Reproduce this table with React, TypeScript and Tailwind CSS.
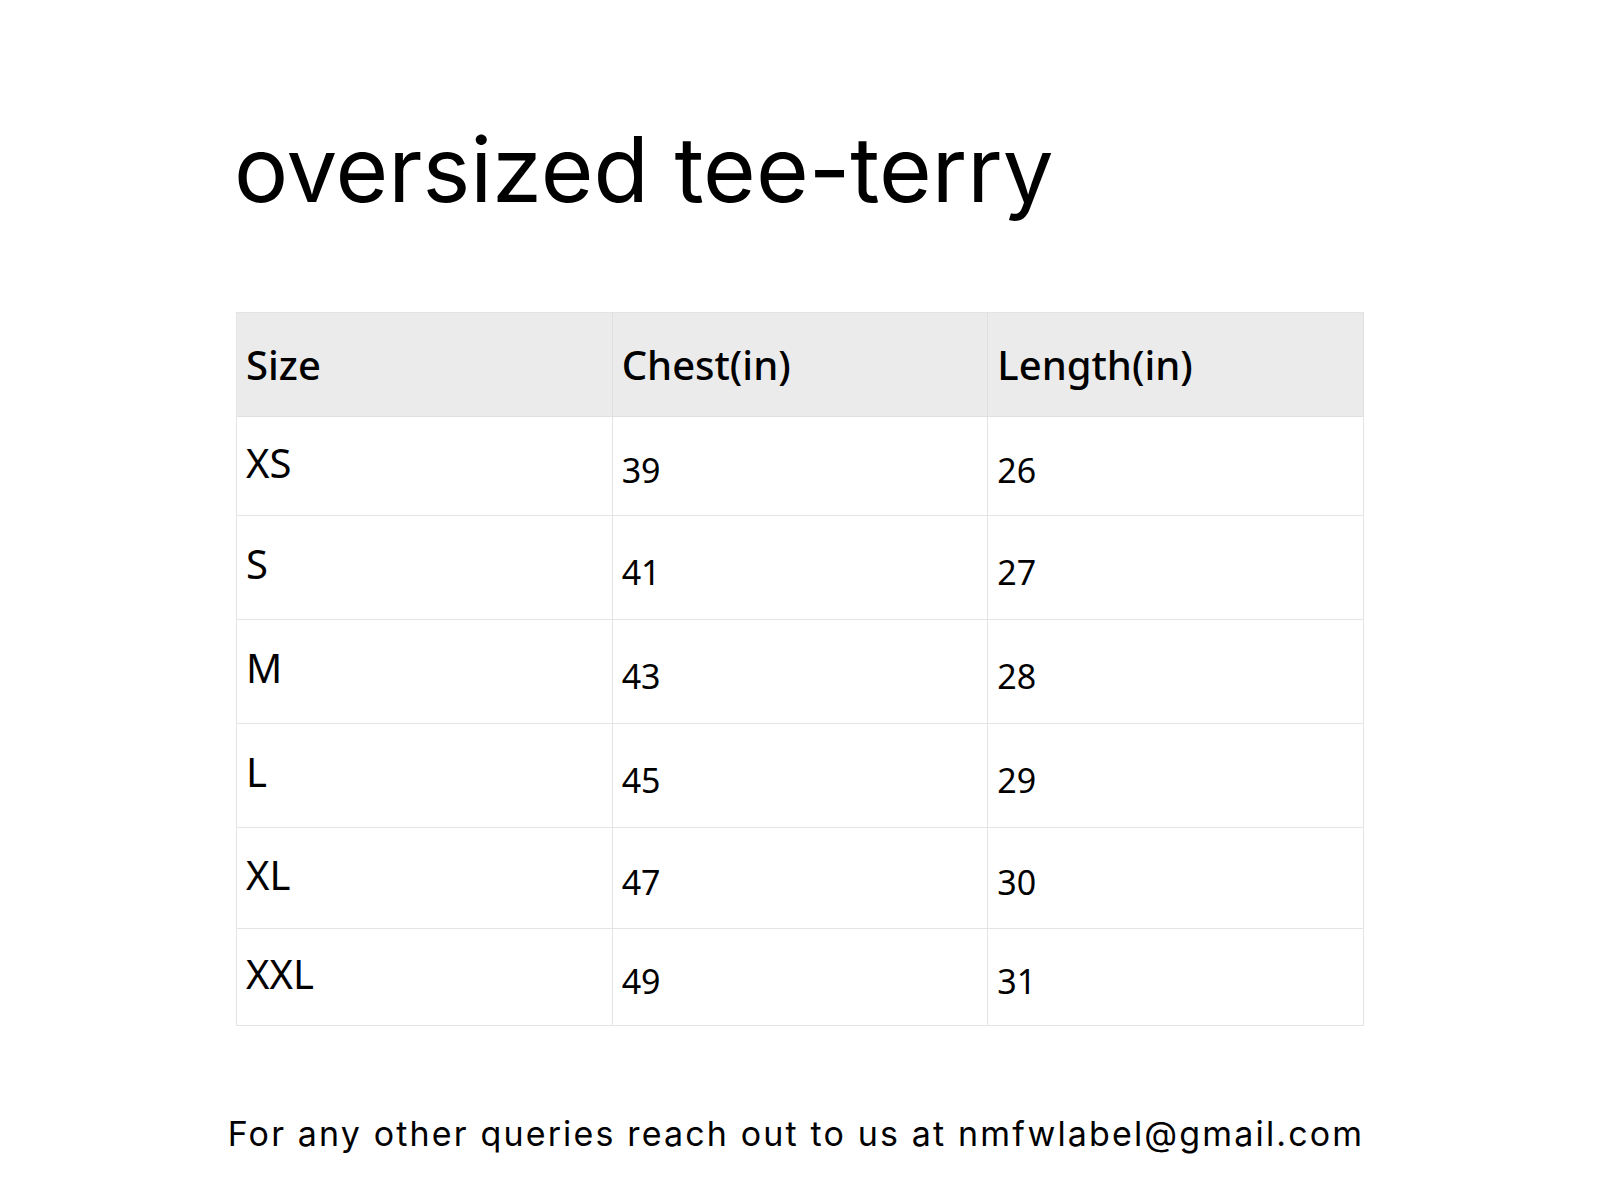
const rows = [
  { size: 'XS', chest: '39', length: '26', h: 'h-[99px]' },
  { size: 'S', chest: '41', length: '27', h: 'h-[104px]' },
  { size: 'M', chest: '43', length: '28', h: 'h-[104px]' },
  { size: 'L', chest: '45', length: '29', h: 'h-[104px]' },
  { size: 'XL', chest: '47', length: '30', h: 'h-[101px]' },
  { size: 'XXL', chest: '49', length: '31', h: 'h-[97px]' },
];

/** 尺码表页面 */
export default function App() {
  return (
    <div className="min-h-screen w-full bg-white text-black">
      <div className="flex flex-col pt-[124px]">
        {/* 标题 */}
        <h1 className="ml-[234px] font-['Inter',sans-serif] text-[90.5px] leading-none font-normal">
          oversized tee-terry
        </h1>

        {/* 尺码表 */}
        <div className="mt-[97px] ml-[236px] w-[1128px] border-t border-l border-[#e4e4e4]">
          <div className="flex h-[104px] bg-[#ebebeb] font-['Noto_Sans',sans-serif] text-[40px] font-medium">
            <div className="flex w-1/3 items-center border-r border-b border-[#e0e0e0] pl-[9px] pt-[2px]">Size</div>
            <div className="flex w-1/3 items-center border-r border-b border-[#e0e0e0] pl-[9px] pt-[2px]">Chest(in)</div>
            <div className="flex w-1/3 items-center border-r border-b border-[#e0e0e0] pl-[9px] pt-[2px]">Length(in)</div>
          </div>
          {rows.map(r => (
            <div key={r.size} className={`flex ${r.h} font-['Noto_Sans',sans-serif]`}>
              <div className="flex w-1/3 items-center border-r border-b border-[#e4e4e4] pb-[6px] pl-[9px] text-[40px]">
                {r.size}
              </div>
              <div className="flex w-1/3 items-center border-r border-b border-[#e4e4e4] pt-[10px] pl-[9px] text-[34px]">
                {r.chest}
              </div>
              <div className="flex w-1/3 items-center border-r border-b border-[#e4e4e4] pt-[10px] pl-[9px] text-[34px]">
                {r.length}
              </div>
            </div>
          ))}
        </div>

        {/* 联系方式 */}
        <p className="mt-[91px] pr-[8px] text-center font-['Inter',sans-serif] text-[34px] leading-none tracking-[2.15px]">
          For any other queries reach out to us at nmfwlabel@gmail.com
        </p>
      </div>
    </div>
  );
}
